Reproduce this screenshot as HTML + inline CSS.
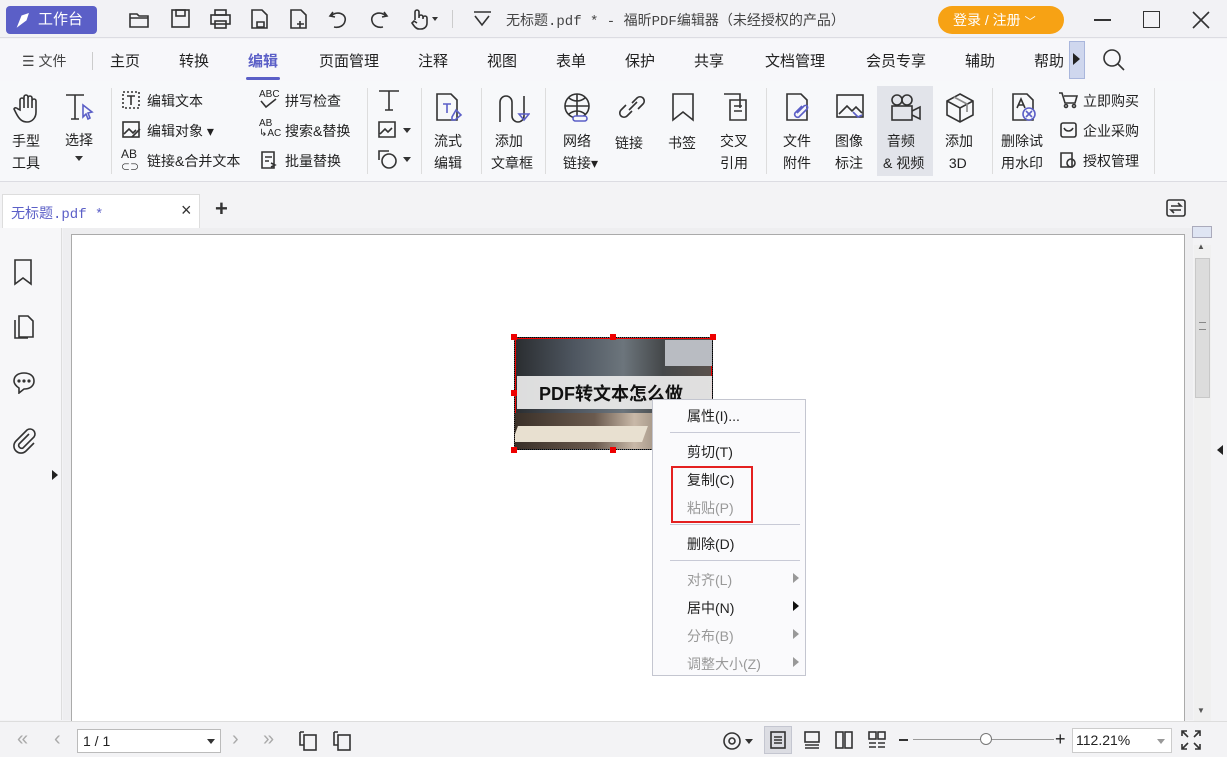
<!DOCTYPE html>
<html><head><meta charset="utf-8"><style>
*{margin:0;padding:0;box-sizing:border-box}
body{width:1227px;height:757px;overflow:hidden;background:#f3f3f5;font-family:"Liberation Sans","Noto Sans CJK SC",sans-serif;font-size:14px;color:#222;position:relative}
.a{position:absolute}
.t{position:absolute;white-space:nowrap}
.ic{position:absolute;stroke:#333;fill:none;stroke-width:1.6}
.menu div{position:absolute;left:34px;font-size:14px}
.g{color:#999}
</style></head><body>
<div class="a" style="left:0;top:0;width:1227px;height:38px;background:#f2f2f5;border-bottom:1px solid #dcdce2"></div>
<div class="a" style="left:6px;top:6px;width:91px;height:28px;background:#5b5fc7;border-radius:4px;color:#fff;font-size:15px;line-height:28px;padding-left:32px">工作台</div>
<svg class="a" style="left:15px;top:12px" width="16" height="16"><path d="M3 14 L7 4 L13 2 L11 8 Z M3 14 L8 9" stroke="#fff" fill="#fff" stroke-width="1.2"/></svg>
<svg class="ic" style="left:128px;top:8px" width="24" height="22"><path d="M2 6h7l2 2h9v11H2z M2 10h18"/></svg>
<svg class="ic" style="left:170px;top:8px" width="22" height="22"><rect x="2" y="2" width="17" height="17"/><rect x="6" y="2" width="9" height="6"/></svg>
<svg class="ic" style="left:209px;top:8px" width="24" height="22"><rect x="6" y="2" width="11" height="5"/><rect x="2" y="7" width="19" height="9"/><rect x="6" y="13" width="11" height="7"/></svg>
<svg class="ic" style="left:249px;top:8px" width="22" height="22"><path d="M3 2h10l5 5v13H3z M8 14h7v5H8z"/></svg>
<svg class="ic" style="left:288px;top:8px" width="22" height="22"><path d="M3 2h10l5 5v13H3z M12 13v7 M9 16h7"/></svg>
<svg class="ic" style="left:327px;top:8px" width="22" height="22"><path d="M6 4 L3 8 L8 9 M4 8 C10 2 20 6 18 13 C17 18 12 20 7 19"/></svg>
<svg class="ic" style="left:368px;top:8px" width="22" height="22"><path d="M16 4 L19 8 L14 9 M18 8 C12 2 2 6 4 13 C5 18 10 20 15 19"/></svg>
<svg class="ic" style="left:407px;top:8px" width="32" height="22"><path d="M8 12V4a2 2 0 014 0v6 M12 9a2 2 0 014 0v2 M16 10a2 2 0 014 0v5c0 4-3 6-6 6h-2c-3 0-5-3-7-6l2-2 3 2"/><path d="M25 9h6l-3 4z" fill="#333" stroke="none"/></svg>
<div class="a" style="left:452px;top:10px;width:1px;height:18px;background:#ccc"></div>
<svg class="ic" style="left:472px;top:10px" width="22" height="18"><path d="M2 2h17 M3 6l7 9 7-9"/></svg>
<div class="t" style="left:506px;top:10px;font-size:14px;color:#444;font-family:'Liberation Mono','Noto Sans CJK SC',monospace">无标题.pdf * - 福昕PDF编辑器（未经授权的产品）</div>
<div class="a" style="left:938px;top:6px;width:126px;height:28px;background:#f7a214;border-radius:14px;color:#fff;font-size:14px;line-height:28px;padding-left:15px">登录 / 注册 <span style="font-size:11px">﹀</span></div>
<div class="a" style="left:1094px;top:19px;width:17px;height:1.5px;background:#333"></div>
<div class="a" style="left:1143px;top:11px;width:17px;height:17px;border:1.5px solid #333"></div>
<svg class="ic" style="left:1191px;top:10px" width="20" height="20"><path d="M2 2L18 18M18 2L2 18"/></svg>
<div class="a" style="left:0;top:39px;width:1227px;height:42px;background:#f7f7fa"></div>
<div class="t" style="left:22px;top:51px;font-size:14px;color:#444">☰ 文件</div>
<div class="a" style="left:92px;top:52px;width:1px;height:18px;background:#ccc"></div>
<div class="t" style="left:110px;top:50px;font-size:15px">主页</div>
<div class="t" style="left:179px;top:50px;font-size:15px">转换</div>
<div class="t" style="left:248px;top:50px;font-size:15px;color:#5b5fc7;font-weight:bold">编辑</div>
<div class="a" style="left:246px;top:77px;width:34px;height:3px;background:#5b5fc7;border-radius:2px"></div>
<div class="t" style="left:319px;top:50px;font-size:15px">页面管理</div>
<div class="t" style="left:418px;top:50px;font-size:15px">注释</div>
<div class="t" style="left:487px;top:50px;font-size:15px">视图</div>
<div class="t" style="left:556px;top:50px;font-size:15px">表单</div>
<div class="t" style="left:625px;top:50px;font-size:15px">保护</div>
<div class="t" style="left:694px;top:50px;font-size:15px">共享</div>
<div class="t" style="left:765px;top:50px;font-size:15px">文档管理</div>
<div class="t" style="left:866px;top:50px;font-size:15px">会员专享</div>
<div class="t" style="left:965px;top:50px;font-size:15px">辅助</div>
<div class="t" style="left:1034px;top:50px;font-size:15px">帮助</div>
<div class="a" style="left:1069px;top:41px;width:16px;height:38px;background:#cfd7ee;border:1px solid #a9b6dc"></div>
<div class="a" style="left:1073px;top:53px;width:0;height:0;border-left:7px solid #222;border-top:6px solid transparent;border-bottom:6px solid transparent"></div>
<svg class="ic" style="left:1102px;top:48px" width="24" height="24"><circle cx="10" cy="10" r="8"/><path d="M16 16l6 6"/></svg>
<div class="a" style="left:0;top:81px;width:1227px;height:101px;background:#f7f8fa;border-bottom:1px solid #dcdce2"></div>
<svg class="ic" style="left:12px;top:92px" width="32" height="32"><path d="M8 18V8a2 2 0 014 0v8V5a2 2 0 014 0v11V6a2 2 0 014 0v10V9a2 2 0 014 0v11c0 6-4 10-9 10s-8-3-11-9l-2-4c1-2 3-1 4 0z"/></svg>
<div class="t" style="left:12px;top:130px;line-height:22px;font-size:14px">手型<br>工具</div>
<svg class="ic" style="left:63px;top:93px" width="32" height="32"><path d="M3 2h18M12 2v24M8 26h8"/><path d="M20 12l9 7-4 1 2 5-2 1-2-5-3 3z" stroke="#5b5fc7"/></svg>
<div class="t" style="left:65px;top:130px;font-size:14px">选择</div>
<div class="a" style="left:75px;top:156px;border-top:5px solid #333;border-left:4px solid transparent;border-right:4px solid transparent"></div>
<div class="a" style="left:111px;top:88px;width:1px;height:86px;background:#ddd"></div>
<svg class="ic" style="left:121px;top:90px" width="20" height="20" stroke-width="1.3"><rect x="2" y="2" width="16" height="16" stroke-dasharray="2 2"/><path d="M6 6h8M10 6v9"/></svg>
<div class="t" style="left:147px;top:91px">编辑文本</div>
<svg class="ic" style="left:121px;top:120px" width="22" height="20" stroke-width="1.3"><rect x="2" y="2" width="16" height="15"/><path d="M3 14l5-5 4 4 3-3M11 17l8-8"/></svg>
<div class="t" style="left:147px;top:121px">编辑对象 ▾</div>
<div class="t" style="left:121px;top:148px;font-size:12px;line-height:12px">AB<br><span style="font-size:9px">⊂⊃</span></div>
<div class="t" style="left:147px;top:151px">链接&amp;合并文本</div>
<div class="t" style="left:259px;top:89px;font-size:10px">ABC</div>
<svg class="ic" style="left:259px;top:98px" width="20" height="12" stroke-width="1.4"><path d="M2 3l5 6 10-8"/></svg>
<div class="t" style="left:285px;top:91px">拼写检查</div>
<div class="t" style="left:259px;top:119px;font-size:10px;line-height:10px">AB<br>↳AC</div>
<div class="t" style="left:285px;top:121px">搜索&amp;替换</div>
<svg class="ic" style="left:259px;top:150px" width="20" height="20" stroke-width="1.3"><path d="M3 2h12v16H3z M6 7h7M6 11h4M12 13l4 2-4 2"/></svg>
<div class="t" style="left:285px;top:151px">批量替换</div>
<div class="a" style="left:367px;top:88px;width:1px;height:86px;background:#ddd"></div>
<svg class="ic" style="left:377px;top:88px" width="24" height="24"><path d="M2 3h20M12 3v19M8 22h8"/></svg>
<svg class="ic" style="left:377px;top:119px" width="36" height="22" stroke-width="1.4"><path d="M2 3h16v15H2z M3 15l5-5 3 3 4-4"/><path d="M26 9h8l-4 5z" fill="#333" stroke="none"/></svg>
<svg class="ic" style="left:377px;top:148px" width="36" height="22" stroke-width="1.4"><path d="M2 12V3h10"/><circle cx="12" cy="13" r="7"/><path d="M26 9h8l-4 5z" fill="#333" stroke="none"/></svg>
<div class="a" style="left:421px;top:88px;width:1px;height:86px;background:#ddd"></div>
<svg class="ic" style="left:434px;top:92px" width="32" height="32"><path d="M3 2h14l6 6v20H3z"/><path d="M9 12h8M13 12v9" stroke="#5b5fc7"/><path d="M22 18l5 5-6 5-3 0 0-3z" stroke="#5b5fc7"/></svg>
<div class="t" style="left:434px;top:130px;line-height:22px">流式<br>编辑</div>
<div class="a" style="left:481px;top:88px;width:1px;height:86px;background:#ddd"></div>
<svg class="ic" style="left:496px;top:92px" width="34" height="34"><path d="M4 30V10a6 6 0 0112 0v14a6 6 0 0012 0V4"/><path d="M23 22h10l-5 6z" stroke="#5b5fc7"/></svg>
<div class="t" style="left:491px;top:130px;line-height:22px">&nbsp;添加<br>文章框</div>
<div class="a" style="left:545px;top:88px;width:1px;height:86px;background:#ddd"></div>
<svg class="ic" style="left:563px;top:92px" width="32" height="32"><circle cx="14" cy="14" r="12"/><path d="M2 14h24M14 2v24M6 6c5 4 11 4 16 0M6 22c5-4 11-4 16 0"/><rect x="10" y="24" width="14" height="5" rx="2.5" stroke="#5b5fc7" fill="#f7f8fa"/></svg>
<div class="t" style="left:563px;top:130px;line-height:22px">网络<br>链接▾</div>
<svg class="ic" style="left:615px;top:92px" width="32" height="32" stroke="#6b73d6"><path d="M14 18l8-8M11 13l-5 5a4 4 0 006 6l5-5M17 11l5-5a4 4 0 016 6l-5 5"/></svg>
<div class="t" style="left:615px;top:133px">链接</div>
<svg class="ic" style="left:670px;top:92px" width="28" height="32"><path d="M3 2h20v26l-10-8-10 8z"/></svg>
<div class="t" style="left:668px;top:133px">书签</div>
<svg class="ic" style="left:722px;top:92px" width="28" height="32"><path d="M2 2h16v14 M8 8h16v20H8z M12 14h8M12 19h8"/></svg>
<div class="t" style="left:720px;top:130px;line-height:22px">交叉<br>引用</div>
<div class="a" style="left:766px;top:88px;width:1px;height:86px;background:#ddd"></div>
<svg class="ic" style="left:784px;top:92px" width="30" height="32"><path d="M3 2h14l6 6v20H3z"/><path d="M18 14l-7 7a3 3 0 004 4l8-8a2 2 0 00-3-3l-7 7" stroke="#5b5fc7"/></svg>
<div class="t" style="left:783px;top:130px;line-height:22px">文件<br>附件</div>
<svg class="ic" style="left:835px;top:92px" width="32" height="32"><rect x="2" y="3" width="26" height="22"/><path d="M4 22l8-8 5 5 4-4 6 6"/><path d="M18 20l5 5 4-2" stroke="#5b5fc7"/></svg>
<div class="t" style="left:835px;top:130px;line-height:22px">图像<br>标注</div>
<div class="a" style="left:877px;top:86px;width:56px;height:90px;background:#e2e4ea"></div>
<svg class="ic" style="left:889px;top:92px" width="34" height="32"><circle cx="8" cy="8" r="5"/><circle cx="18" cy="8" r="5"/><rect x="3" y="14" width="20" height="14"/><path d="M23 19l8-4v12l-8-4"/></svg>
<div class="t" style="left:883px;top:130px;line-height:22px">&nbsp;音频<br>&amp; 视频</div>
<svg class="ic" style="left:944px;top:92px" width="32" height="32"><path d="M16 2l13 7v14l-13 7-13-7V9z M3 9l13 7 13-7 M16 16v14"/><path d="M10 5l13 7v8" stroke="#888"/></svg>
<div class="t" style="left:945px;top:130px;line-height:22px">添加<br>&nbsp;3D</div>
<div class="a" style="left:992px;top:88px;width:1px;height:86px;background:#ddd"></div>
<svg class="ic" style="left:1010px;top:92px" width="30" height="32"><path d="M3 2h14l6 6v20H3z"/><circle cx="19" cy="22" r="6" stroke="#5b5fc7" fill="#f7f8fa"/><path d="M16 19l6 6M22 19l-6 6" stroke="#5b5fc7"/><path d="M7 16l4-9 4 9M8 13h6"/></svg>
<div class="t" style="left:1001px;top:130px;line-height:22px">删除试<br>用水印</div>
<svg class="ic" style="left:1058px;top:91px" width="20" height="18" stroke-width="1.4"><path d="M1 2h3l3 10h10l2-7H6"/><circle cx="8" cy="15" r="1.5"/><circle cx="16" cy="15" r="1.5"/></svg>
<div class="t" style="left:1083px;top:91px">立即购买</div>
<svg class="ic" style="left:1059px;top:121px" width="20" height="18" stroke-width="1.4"><rect x="2" y="2" width="15" height="14" rx="2"/><path d="M5 7c2 4 7 4 9 0"/></svg>
<div class="t" style="left:1083px;top:121px">企业采购</div>
<svg class="ic" style="left:1059px;top:151px" width="20" height="18" stroke-width="1.4"><path d="M2 2h11v14H2z"/><circle cx="12" cy="12" r="4"/></svg>
<div class="t" style="left:1083px;top:151px">授权管理</div>
<div class="a" style="left:1154px;top:88px;width:1px;height:86px;background:#ddd"></div>
<div class="a" style="left:0;top:183px;width:1227px;height:45px;background:#f3f3f5"></div>
<div class="a" style="left:2px;top:194px;width:198px;height:34px;background:#fff;border:1px solid #ddd;border-bottom:none"></div>
<div class="t" style="left:11px;top:203px;font-family:'Liberation Mono','Noto Sans CJK SC',monospace;color:#5b5fc7;font-size:14px">无标题.pdf *</div>
<div class="t" style="left:181px;top:200px;font-size:18px;color:#333">×</div>
<div class="t" style="left:215px;top:196px;font-size:22px;font-weight:bold;color:#333">+</div>
<svg class="ic" style="left:1165px;top:198px" width="22" height="20" stroke-width="1.3"><rect x="2" y="2" width="18" height="16" rx="2"/><path d="M6 8h10l-3-3M16 12H6l3 3"/></svg>
<div class="a" style="left:0;top:228px;width:62px;height:492px;background:#f7f7f9;border-right:1px solid #ddd"></div>
<svg class="ic" style="left:12px;top:258px" width="22" height="30"><path d="M3 2h16v24l-8-6-8 6z"/></svg>
<svg class="ic" style="left:12px;top:314px" width="24" height="26"><path d="M7 2h9l5 5v16H7z M3 6v18h13"/></svg>
<svg class="ic" style="left:11px;top:370px" width="26" height="24"><path d="M3 11c0-5 4-8 10-8s10 3 10 8-4 8-10 8l-5 4v-5c-3-2-5-4-5-7z"/><circle cx="8" cy="11" r=".8"/><circle cx="13" cy="11" r=".8"/><circle cx="18" cy="11" r=".8"/></svg>
<svg class="ic" style="left:11px;top:426px" width="26" height="30"><path d="M18 8l-10 10a3 3 0 004 4l11-11a5 5 0 00-7-7L5 15a7 7 0 0010 10l8-8"/></svg>
<div class="a" style="left:52px;top:470px;border-left:6px solid #222;border-top:5px solid transparent;border-bottom:5px solid transparent"></div>
<div class="a" style="left:63px;top:228px;width:1130px;height:492px;background:#eeeef0"></div>
<div class="a" style="left:71px;top:234px;width:1114px;height:488px;background:#fff;border:1px solid #aaa"></div>
<div class="a" style="left:1193px;top:228px;width:34px;height:492px;background:#f3f3f5"></div>
<div class="a" style="left:1192px;top:226px;width:20px;height:12px;background:#dfe5f3;border:1px solid #aab"></div>
<div class="a" style="left:1194px;top:245px;width:17px;height:476px;background:#f0f0f0"></div>
<div class="a" style="left:1195px;top:258px;width:15px;height:140px;background:#dcdcdc;border:1px solid #c8c8c8"></div>
<div class="a" style="left:1199px;top:322px;width:7px;height:8px;border-top:1px solid #888;border-bottom:1px solid #888"></div>
<div class="t" style="left:1197px;top:242px;font-size:8px;color:#555">▲</div>
<div class="t" style="left:1197px;top:706px;font-size:8px;color:#555">▼</div>
<div class="a" style="left:1217px;top:445px;border-right:6px solid #222;border-top:5px solid transparent;border-bottom:5px solid transparent"></div>
<div class="a" style="left:514px;top:337px;width:199px;height:113px;background:linear-gradient(90deg,#2a2d30 0%,#4e5660 30%,#6c757c 55%,#45484a 75%,#5a514c 100%);border:1px dotted #000;outline:1px solid #e00;outline-offset:-2px;overflow:hidden">
<div class="a" style="left:150px;top:2px;width:50px;height:26px;background:#b9bcc2"></div>
<div class="a" style="left:0;top:75px;width:199px;height:38px;background:linear-gradient(90deg,#3a3028,#6a5a4e 40%,#c9b9a8 60%,#403830)"></div>
<div class="a" style="left:0;top:88px;width:130px;height:16px;background:#e8e0d0;transform:skewX(-20deg)"></div>
<div class="a" style="left:2px;top:38px;width:195px;height:33px;background:rgba(235,235,235,.93)"></div>
<div class="t" style="left:24px;top:42px;font-size:18px;font-weight:bold;color:#111">PDF转文本怎么做</div>
</div>
<div class="a" style="left:511px;top:334px;width:6px;height:6px;background:#e00"></div>
<div class="a" style="left:610px;top:334px;width:6px;height:6px;background:#e00"></div>
<div class="a" style="left:710px;top:334px;width:6px;height:6px;background:#e00"></div>
<div class="a" style="left:511px;top:390px;width:6px;height:6px;background:#e00"></div>
<div class="a" style="left:511px;top:447px;width:6px;height:6px;background:#e00"></div>
<div class="a" style="left:610px;top:447px;width:6px;height:6px;background:#e00"></div>
<div class="a menu" style="left:652px;top:399px;width:154px;height:277px;background:#fafafc;border:1px solid #c4c6d0">
<div style="top:6px">属性(I)...</div>
<div class="a" style="left:17px;top:32px;width:130px;height:1px;background:#c8cad6"></div>
<div style="top:42px">剪切(T)</div>
<div style="top:70px">复制(C)</div>
<div class="g" style="top:98px">粘贴(P)</div>
<div class="a" style="left:17px;top:124px;width:130px;height:1px;background:#c8cad6"></div>
<div style="top:134px">删除(D)</div>
<div class="a" style="left:17px;top:160px;width:130px;height:1px;background:#c8cad6"></div>
<div class="g" style="top:170px">对齐(L)</div>
<div style="top:198px">居中(N)</div>
<div class="g" style="top:226px">分布(B)</div>
<div class="g" style="top:254px">调整大小(Z)</div>
<div class="a" style="left:140px;top:173px;border-left:6px solid #999;border-top:5px solid transparent;border-bottom:5px solid transparent"></div>
<div class="a" style="left:140px;top:201px;border-left:6px solid #111;border-top:5px solid transparent;border-bottom:5px solid transparent"></div>
<div class="a" style="left:140px;top:229px;border-left:6px solid #999;border-top:5px solid transparent;border-bottom:5px solid transparent"></div>
<div class="a" style="left:140px;top:257px;border-left:6px solid #999;border-top:5px solid transparent;border-bottom:5px solid transparent"></div>
</div>
<div class="a" style="left:671px;top:466px;width:82px;height:57px;border:2px solid #e42020"></div>
<div class="a" style="left:0;top:721px;width:1227px;height:36px;background:#f3f3f5;border-top:1px solid #ddd"></div>
<div class="t" style="left:17px;top:728px;font-size:20px;color:#aaa">«</div>
<div class="t" style="left:54px;top:728px;font-size:20px;color:#aaa">‹</div>
<div class="a" style="left:77px;top:729px;width:144px;height:24px;background:#fff;border:1px solid #bbb;padding:3px 5px;font-size:14px">1 / 1</div>
<div class="a" style="left:207px;top:739px;border-top:5px solid #333;border-left:4px solid transparent;border-right:4px solid transparent"></div>
<div class="t" style="left:232px;top:728px;font-size:20px;color:#aaa">›</div>
<div class="t" style="left:263px;top:728px;font-size:20px;color:#aaa">»</div>
<svg class="ic" style="left:296px;top:729px" width="24" height="24" stroke-width="1.4"><rect x="8" y="6" width="12" height="15"/><path d="M4 3v13h4M4 3h4"/></svg>
<svg class="ic" style="left:330px;top:729px" width="24" height="24" stroke="#aaa" stroke-width="1.4"><rect x="8" y="6" width="12" height="15"/><path d="M4 3v13h4M4 3h4"/></svg>
<svg class="ic" style="left:722px;top:731px" width="36" height="20" stroke-width="1.5"><circle cx="10" cy="10" r="8"/><circle cx="10" cy="10" r="3"/><path d="M23 8h8l-4 5z" fill="#333" stroke="none"/></svg>
<div class="a" style="left:764px;top:726px;width:28px;height:28px;background:#dcdde3;border:1px solid #c4c6d0"></div>
<svg class="ic" style="left:768px;top:730px" width="20" height="20" stroke-width="1.4"><rect x="3" y="2" width="14" height="16"/><path d="M6 7h8M6 10h8M6 13h8"/></svg>
<svg class="ic" style="left:802px;top:730px" width="20" height="20" stroke="#888" stroke-width="1.4"><rect x="3" y="2" width="14" height="10"/><path d="M3 15h14M3 18h14"/></svg>
<svg class="ic" style="left:834px;top:730px" width="20" height="20" stroke="#888" stroke-width="1.4"><rect x="2" y="2" width="7" height="16"/><rect x="11" y="2" width="7" height="16"/></svg>
<svg class="ic" style="left:867px;top:730px" width="20" height="20" stroke="#888" stroke-width="1.4"><rect x="2" y="2" width="7" height="7"/><rect x="11" y="2" width="7" height="7"/><path d="M2 13h7M11 13h7M2 17h7M11 17h7"/></svg>
<div class="a" style="left:899px;top:739px;width:9px;height:2px;background:#333"></div>
<div class="a" style="left:913px;top:739px;width:141px;height:1px;background:#999"></div>
<div class="a" style="left:980px;top:733px;width:12px;height:12px;border-radius:50%;background:#fff;border:1px solid #777"></div>
<div class="t" style="left:1055px;top:729px;font-size:18px">+</div>
<div class="a" style="left:1072px;top:728px;width:100px;height:25px;background:#fff;border:1px solid #ccc;padding:3px 3px;font-size:14px">112.21%</div>
<div class="a" style="left:1157px;top:739px;border-top:5px solid #999;border-left:4px solid transparent;border-right:4px solid transparent"></div>
<svg class="ic" style="left:1180px;top:729px" width="22" height="22" stroke-width="1.5"><path d="M2 7V2h5M2 2l6 6M20 7V2h-5M20 2l-6 6M2 15v5h5M2 20l6-6M20 15v5h-5M20 20l-6-6"/></svg>
</body></html>
